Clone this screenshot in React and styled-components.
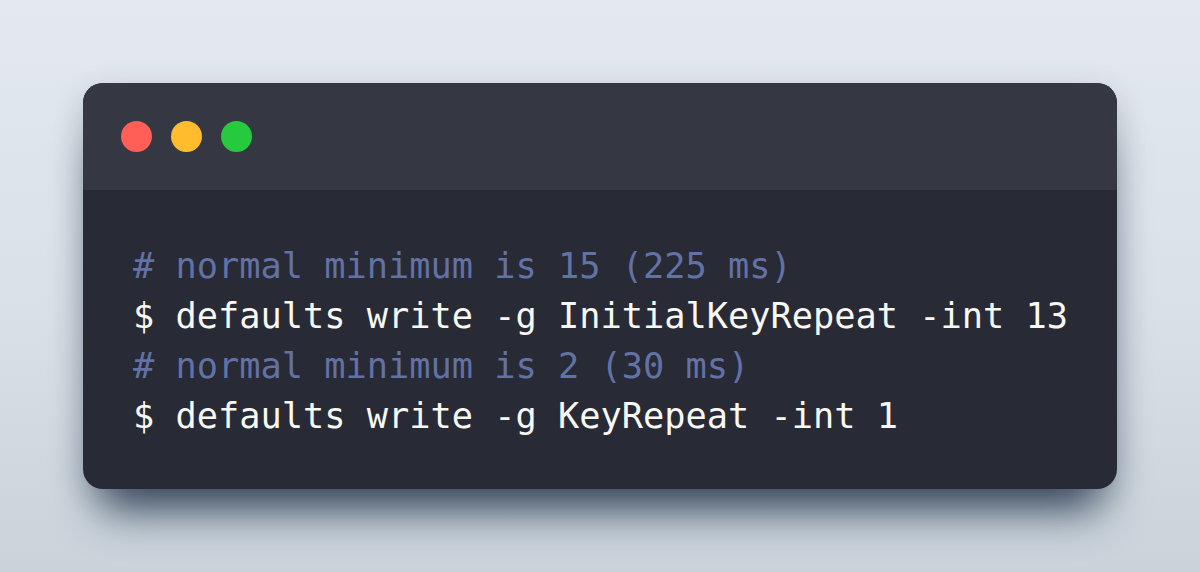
import React from "react";
import styled, { createGlobalStyle } from "styled-components";

const Global = createGlobalStyle`
  html, body { margin: 0; padding: 0; }
  body {
    width: 1200px;
    height: 572px;
    overflow: hidden;
    background: linear-gradient(180deg, #e3e9ef 0%, #d9e0e7 55%, #cad3da 100%);
  }
`;

const Page = styled.div`
  box-sizing: border-box;
  width: 1200px;
  height: 572px;
  padding: 83px;
  display: flex;
  flex-direction: column;
`;

const Window = styled.div`
  flex: 1;
  display: flex;
  flex-direction: column;
  border-radius: 20px;
  overflow: hidden;
  background: #282a36;
  box-shadow: 0 38px 45px -18px rgba(35, 52, 75, 0.9), 0 8px 30px rgba(35, 50, 70, 0.18);
`;

const TitleBar = styled.div`
  height: 107px;
  flex: none;
  background: #353743;
  display: flex;
  align-items: center;
  gap: 19px;
  padding-left: 38px;
  box-sizing: border-box;
`;

const Dot = styled.span`
  width: 31px;
  height: 31px;
  border-radius: 50%;
  background: ${(p) => p.$color};
`;

const Code = styled.pre`
  margin: 0;
  padding: 51px 50px 48px;
  font-family: "DejaVu Sans Mono", "Liberation Mono", monospace;
  font-size: 35.3px;
  line-height: 50px;
  color: #f8f8f2;
  white-space: pre;
`;

const Line = styled.div`
  color: ${(p) => (p.$comment ? "#6272a4" : "#f8f8f2")};
`;

const lines = [
  { text: "# normal minimum is 15 (225 ms)", comment: true },
  { text: "$ defaults write -g InitialKeyRepeat -int 13" },
  { text: "# normal minimum is 2 (30 ms)", comment: true },
  { text: "$ defaults write -g KeyRepeat -int 1" },
];

export default function App() {
  return (
    <>
      <Global />
      <Page>
        <Window>
          <TitleBar>
            <Dot $color="#ff5f56" />
            <Dot $color="#ffbd2e" />
            <Dot $color="#27c93f" />
          </TitleBar>
          <Code>
            {lines.map((l, i) => (
              <Line key={i} $comment={l.comment}>
                {l.text}
              </Line>
            ))}
          </Code>
        </Window>
      </Page>
    </>
  );
}
